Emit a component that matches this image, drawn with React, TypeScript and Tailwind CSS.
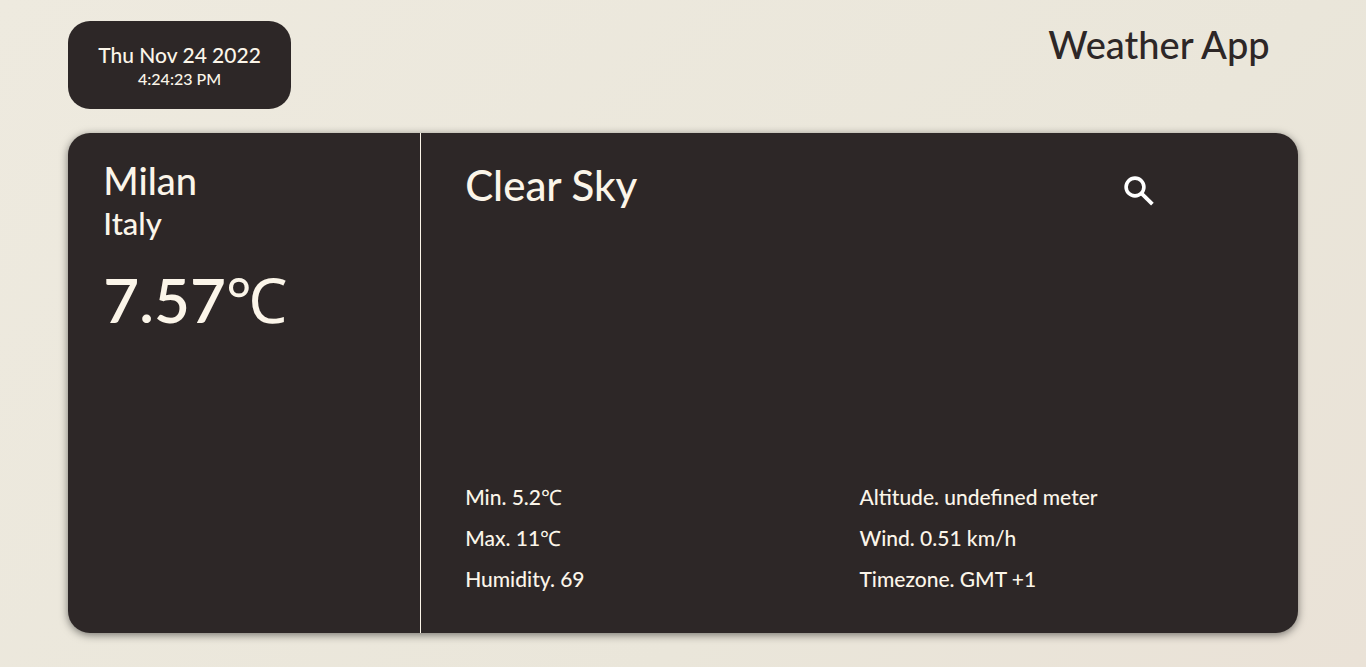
const conditions = [
  ['Min. 5.2', 'Max. 11', 'Humidity. 69'],
  ['Altitude. undefined meter', 'Wind. 0.51 km/h', 'Timezone. GMT +1'],
];

function Celsius() {
  return <span className="font-['Noto_Sans'] leading-none font-normal">℃</span>;
}

function SearchIcon() {
  return (
    <svg className="size-8" viewBox="0 0 32 32" fill="none" stroke="currentColor" aria-hidden="true">
      <circle cx="12" cy="12" r="8.9" strokeWidth="3.6" />
      <path d="M18.2 18.2 29.4 29.2" strokeWidth="3.8" />
    </svg>
  );
}

export default function App() {
  return (
    <div className="min-h-screen bg-[linear-gradient(135deg,#eeeadf_0%,#eae6da_65%,#eae2d7_100%)] px-[5%] pt-[21px] pb-8 font-[Lato,sans-serif] font-medium text-[#fbf5e9]">
      <header className="mb-6 flex items-start justify-between">
        <div className="rounded-[22px] bg-[#2d2727] px-[30px] py-5 text-center">
          <p className="text-[21px] leading-[27px]">Thu Nov 24 2022</p>
          <p className="text-base leading-[21px]">4:24:23 PM</p>
        </div>
        <h1 className="mr-7 text-[38px] leading-[46px] text-[#2d2727]">Weather App</h1>
      </header>

      <main className="flex min-h-[75vh] rounded-[22px] bg-[#2d2727] shadow-[0_2px_8px_rgba(0,0,0,0.5)]">
        <section className="w-[28.7%] border-r border-[#fbf5e9] px-[35px] pt-6">
          <h2 className="text-[38px] leading-[46px]">Milan</h2>
          <p className="text-[31px] leading-[40px]">Italy</p>
          <p className="mt-4 text-[62px] leading-[80px] font-semibold">
            7.57<Celsius />
          </p>
        </section>

        <section className="flex flex-1 flex-col justify-between px-[44px] pt-6 pb-[34px]">
          <div className="flex items-start justify-between">
            <h2 className="text-[42px] leading-[56px]">Clear Sky</h2>
            <button type="button" aria-label="Search" className="mt-[18px] mr-[99px] text-white">
              <SearchIcon />
            </button>
          </div>
          <div className="grid grid-cols-2">
            {conditions.map((column, index) => (
              <ul key={index}>
                {column.map((item) => (
                  <li key={item} className="h-[41px] text-[21px] leading-[41px]">
                    {item}
                    {item.startsWith('M') && <Celsius />}
                  </li>
                ))}
              </ul>
            ))}
          </div>
        </section>
      </main>
    </div>
  );
}
